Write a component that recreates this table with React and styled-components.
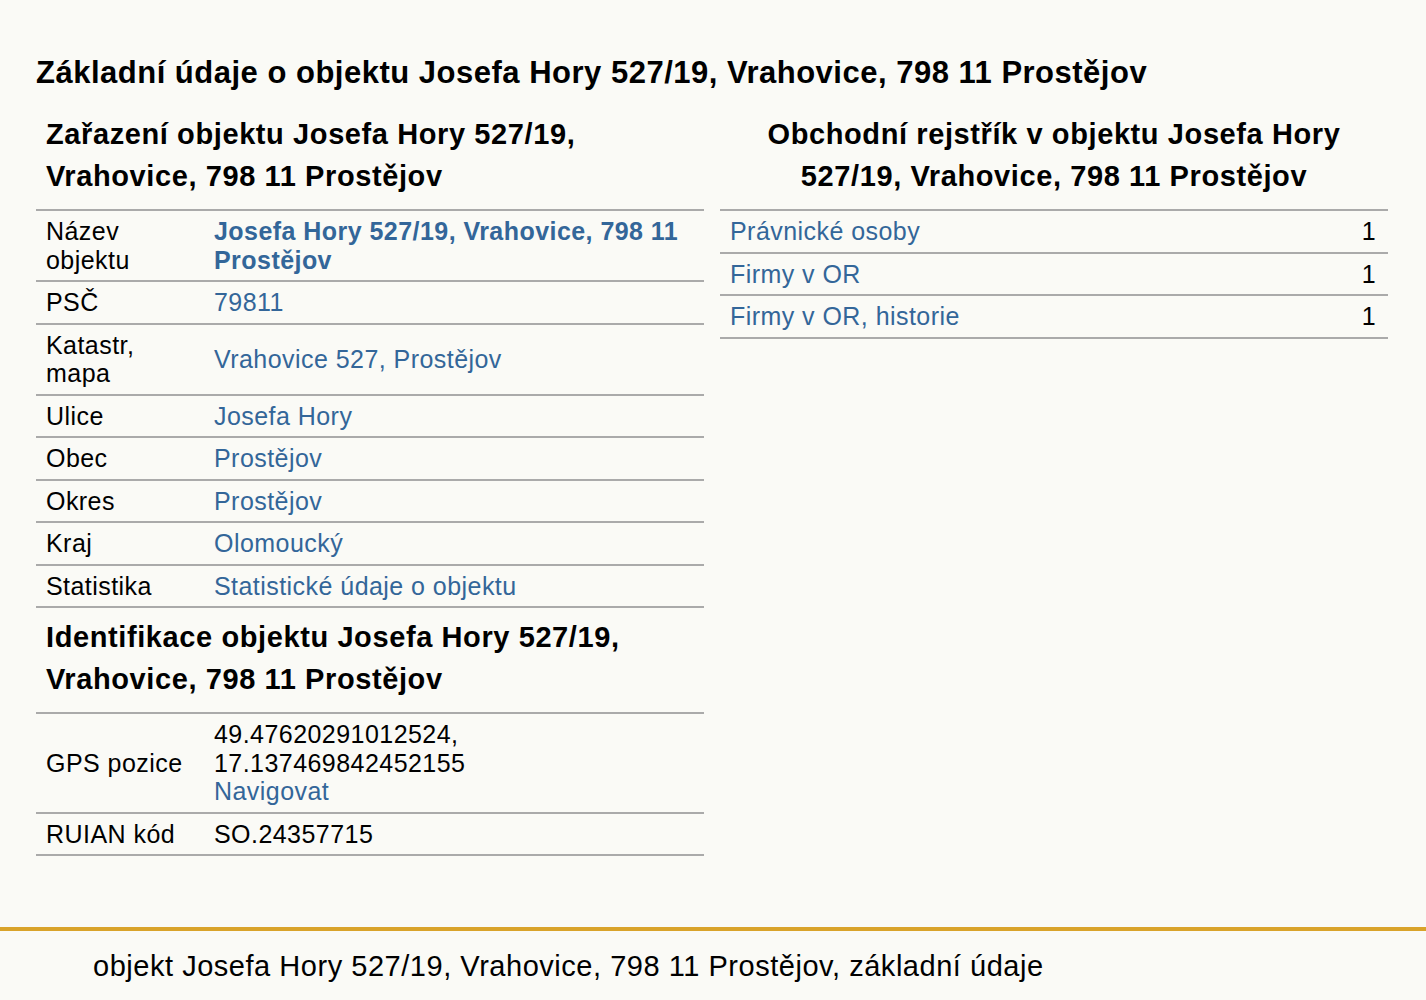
import React from "react";
import styled, { createGlobalStyle } from "styled-components";

const GlobalStyle = createGlobalStyle`
  html, body {
    margin: 0;
    padding: 0;
    background: #fafaf6;
  }
  body {
    font-family: "Liberation Sans", Arial, sans-serif;
    color: #000;
  }
`;

const zarazeni = [
  { label: "Název objektu", value: "Josefa Hory 527/19, Vrahovice, 798 11 Prostějov", bold: true },
  { label: "PSČ", value: "79811" },
  { label: "Katastr, mapa", value: "Vrahovice 527, Prostějov" },
  { label: "Ulice", value: "Josefa Hory" },
  { label: "Obec", value: "Prostějov" },
  { label: "Okres", value: "Prostějov" },
  { label: "Kraj", value: "Olomoucký" },
  { label: "Statistika", value: "Statistické údaje o objektu" },
];

const rejstrik = [
  { name: "Právnické osoby", count: 1 },
  { name: "Firmy v OR", count: 1 },
  { name: "Firmy v OR, historie", count: 1 },
];

function App() {
  return (
    <>
      <GlobalStyle />
      <Page>
        <Main>
          <Title>Základní údaje o objektu Josefa Hory 527/19, Vrahovice, 798 11 Prostějov</Title>
          <Columns>
            <Column>
              <SectionTitle>Zařazení objektu Josefa Hory 527/19, Vrahovice, 798 11 Prostějov</SectionTitle>
              <Table>
                <tbody>
                  {zarazeni.map(row => (
                    <tr key={row.label}>
                      <Label>{row.label}</Label>
                      <Value>
                        <Link href="#" $bold={row.bold}>{row.value}</Link>
                      </Value>
                    </tr>
                  ))}
                </tbody>
              </Table>
              <SectionTitle>Identifikace objektu Josefa Hory 527/19, Vrahovice, 798 11 Prostějov</SectionTitle>
              <Table>
                <tbody>
                  <tr>
                    <Label>GPS pozice</Label>
                    <Value>
                      49.47620291012524,
                      <br />
                      17.137469842452155
                      <br />
                      <Link href="#">Navigovat</Link>
                    </Value>
                  </tr>
                  <tr>
                    <Label>RUIAN kód</Label>
                    <Value>SO.24357715</Value>
                  </tr>
                </tbody>
              </Table>
            </Column>
            <Column>
              <SectionTitle $centered>Obchodní rejstřík v objektu Josefa Hory 527/19, Vrahovice, 798 11 Prostějov</SectionTitle>
              <Table>
                <tbody>
                  {rejstrik.map(row => (
                    <tr key={row.name}>
                      <Value>
                        <Link href="#">{row.name}</Link>
                      </Value>
                      <Count>{row.count}</Count>
                    </tr>
                  ))}
                </tbody>
              </Table>
            </Column>
          </Columns>
        </Main>
        <Footer>
          <FooterText>objekt Josefa Hory 527/19, Vrahovice, 798 11 Prostějov, základní údaje</FooterText>
        </Footer>
      </Page>
    </>
  );
}

const Page = styled.div`
  min-height: 1000px;
  display: flex;
  flex-direction: column;
`;

const Main = styled.div`
  padding: 52px 38px 0 36px;
  height: 927px;
  box-sizing: border-box;
`;

const Title = styled.h1`
  margin: 0 0 19px;
  font-size: 31px;
  letter-spacing: 0.5px;
  line-height: 42px;
  font-weight: bold;
`;

const Columns = styled.div`
  display: grid;
  grid-template-columns: 1fr 1fr;
  gap: 16px;
`;

const Column = styled.div``;

const SectionTitle = styled.h2`
  margin: 0;
  padding: 0 10px 12px;
  font-size: 29px;
  letter-spacing: 0.6px;
  line-height: 42px;
  font-weight: bold;
  text-align: ${props => (props.$centered ? "center" : "left")};
`;

const Table = styled.table`
  width: 100%;
  border-collapse: collapse;
  border-top: 2px solid #aaaaaa;
  margin-bottom: 8px;

  tr {
    border-bottom: 2px solid #aaaaaa;
  }
`;

const Cell = styled.td`
  padding: 6px 10px;
  font-size: 25px;
  letter-spacing: 0.45px;
  line-height: 28.5px;
  vertical-align: middle;
`;

const Label = styled(Cell)`
  width: 148px;
`;

const Value = styled(Cell)``;

const Count = styled(Cell)`
  padding-right: 12px;
  text-align: right;
`;

const Link = styled.a`
  color: #336699;
  text-decoration: none;
  font-weight: ${props => (props.$bold ? "bold" : "normal")};
`;

const Footer = styled.footer`
  border-top: 4px solid #d9a32a;
  padding: 18px 0 0 93px;
`;

const FooterText = styled.div`
  font-size: 29px;
  letter-spacing: 0.53px;
  line-height: 34px;
`;

export default App;
